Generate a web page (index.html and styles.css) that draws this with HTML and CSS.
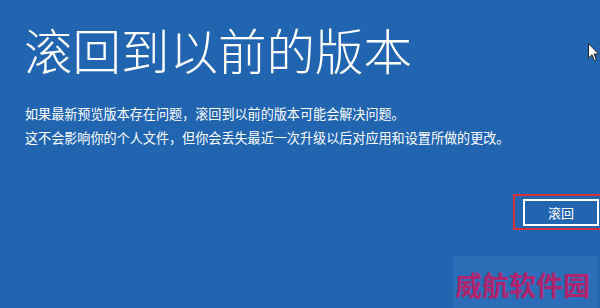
FILE: index.html
```html
<!DOCTYPE html>
<html lang="zh-CN">
<head>
<meta charset="utf-8">
<link rel="stylesheet" href="styles.css">
</head>
<body>
<div class="screen">
  <h1 class="title">滚回到以前的版本</h1>
  <div class="desc">
    <p>如果最新预览版本存在问题，滚回到以前的版本可能会解决问题。</p>
    <p>这不会影响你的个人文件，但你会丢失最近一次升级以后对应用和设置所做的更改。</p>
  </div>
  <div class="actions">
    <div class="highlight">
      <button class="btn">滚回</button>
    </div>
  </div>
  <div class="footer">
    <div class="watermark">威航软件园</div>
  </div>
  <svg class="cursor" width="11" height="19" viewBox="0 0 11 19">
    <path d="M0.5 0.5 L0.5 15 L4 11.8 L6.4 17.6 L8.4 16.8 L6 11 L10.5 11 Z" fill="#fff" stroke="#222" stroke-width="1"/>
  </svg>
</div>
</body>
</html>
```
FILE: styles.css
```css
html, body {
  margin: 0;
  padding: 0;
  background: #2165b1;
}
.screen {
  position: relative;
  width: 600px;
  height: 308px;
  overflow: hidden;
  background: #2165b1;
  color: #fff;
  font-family: "Noto Sans CJK SC", "Noto Sans", sans-serif;
  display: flex;
  flex-direction: column;
}
.title {
  margin: 23px 0 0 24px;
  font-size: 48.5px;
  line-height: 52px;
  font-weight: 300;
  letter-spacing: 0;
}
.desc {
  margin: 27px 0 0 25px;
  font-size: 13.1px;
  line-height: 24px;
}
.desc p {
  margin: 0;
}
.actions {
  display: flex;
  justify-content: flex-end;
  margin-top: 44px;
}
.highlight {
  border: 2px solid #d8303a;
  border-right: none;
  padding: 3px 0 2px 8px;
}
.btn {
  display: block;
  width: 76px;
  height: 27px;
  margin: 0 1px 0 0;
  border: 2px solid #fff;
  background: #2165b1;
  color: #fff;
  font-family: "Noto Sans CJK SC", sans-serif;
  font-size: 13px;
  padding: 0;
}
.footer {
  display: flex;
  justify-content: flex-end;
  margin-top: auto;
}
.watermark {
  width: 144px;
  margin-right: 3px;
  height: 52px;
  box-sizing: border-box;
  padding: 14px 0 0 2px;
  background: #2b6db7;
  color: #b0246e;
  font-size: 27px;
  font-weight: 700;
  line-height: 30px;
  letter-spacing: 0;
  white-space: nowrap;
}
.cursor {
  position: absolute;
  left: 588px;
  top: 43px;
}
```
